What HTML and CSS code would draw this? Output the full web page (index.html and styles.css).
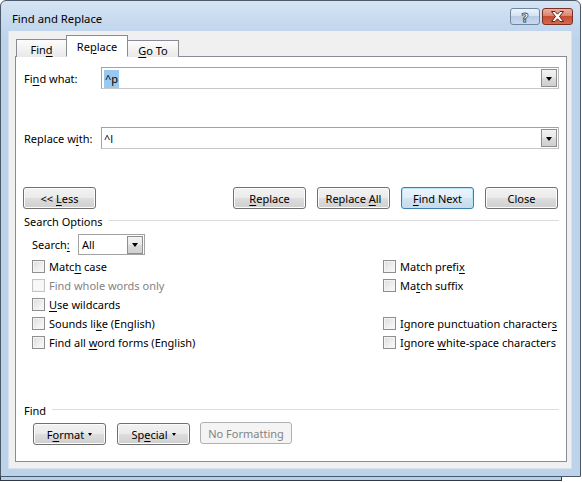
FILE: index.html
```html
<!DOCTYPE html>
<html>
<head>
<meta charset="utf-8">
<link rel="stylesheet" href="styles.css">
</head>
<body>
<div class="desktop">
  <div class="window-behind"></div>
  <div class="window">
    <div class="titlebar">
      <span class="title">Find and Replace</span>
      <div class="caption">
        <div class="cap-btn help"><span class="qmark">?</span></div>
        <div class="cap-btn close">
          <svg width="15" height="11" viewBox="0 0 15 11"><path d="M1.5 0.5 L5 0.5 L7.5 3.2 L10 0.5 L13.5 0.5 L9.5 5.5 L13.5 10.5 L10 10.5 L7.5 7.8 L5 10.5 L1.5 10.5 L5.5 5.5 Z" fill="#fff" stroke="#5a2418" stroke-width="1" stroke-linejoin="round"/></svg>
        </div>
      </div>
    </div>
    <div class="frame">
      <div class="client">
        <div class="tabs">
          <div class="tab first"><span>Fin<u>d</u></span></div>
          <div class="tab active"><span>Re<u>p</u>lace</span></div>
          <div class="tab last"><span><u>G</u>o To</span></div>
        </div>
        <div class="panel">
          <div class="field-row">
            <span class="field-label">Fi<u>n</u>d what:</span>
            <div class="combo"><span class="combo-text"><span class="sel">^p</span></span><span class="combo-btn"><i class="tri"></i></span></div>
          </div>
          <div class="field-row second">
            <span class="field-label">Replace w<u>i</u>th:</span>
            <div class="combo"><span class="combo-text">^l</span><span class="combo-btn"><i class="tri"></i></span></div>
          </div>
          <div class="button-row">
            <div class="btn"><span>&lt;&lt; <u>L</u>ess</span></div>
            <div class="btn-group">
              <div class="btn"><span><u>R</u>eplace</span></div>
              <div class="btn"><span>Replace <u>A</u>ll</span></div>
              <div class="btn default"><span><u>F</u>ind Next</span></div>
              <div class="btn"><span>Close</span></div>
            </div>
          </div>
          <div class="group-head"><span>Search Options</span><i class="rule"></i></div>
          <div class="search-row">
            <span class="search-label">Search<u>:</u></span>
            <div class="select"><span class="select-text">All</span><span class="select-btn"><i class="tri"></i></span></div>
          </div>
          <div class="options">
            <div class="col">
              <div class="check"><i class="box"></i><span>Matc<u>h</u> case</span></div>
              <div class="check disabled"><i class="box"></i><span>Find whole words only</span></div>
              <div class="check"><i class="box"></i><span><u>U</u>se wildcards</span></div>
              <div class="check"><i class="box"></i><span>Sounds li<u>k</u>e (English)</span></div>
              <div class="check"><i class="box"></i><span>Find all <u>w</u>ord forms (English)</span></div>
            </div>
            <div class="col right">
              <div class="check"><i class="box"></i><span>Match prefi<u>x</u></span></div>
              <div class="check"><i class="box"></i><span>Ma<u>t</u>ch suffix</span></div>
              <div class="check empty"></div>
              <div class="check"><i class="box"></i><span>Ignore punctuation character<u>s</u></span></div>
              <div class="check"><i class="box"></i><span>Ignore <u>w</u>hite-space characters</span></div>
            </div>
          </div>
          <div class="group-head find-head"><span>Find</span><i class="rule"></i></div>
          <div class="format-row">
            <div class="btn menu"><span>F<u>o</u>rmat</span><i class="mini-tri"></i></div>
            <div class="btn menu"><span>Sp<u>e</u>cial</span><i class="mini-tri"></i></div>
            <div class="btn disabled wide"><span>No Formatting</span></div>
          </div>
        </div>
      </div>
    </div>
  </div>
</div>
</body>
</html>
```

FILE: styles.css
```css
html, body {
  margin: 0;
  padding: 0;
}
body {
  font-family: "Noto Sans", "Open Sans", sans-serif;
  font-size: 11px;
  color: #000;
  background: #fff;
}
u {
  text-decoration: underline;
  text-underline-offset: 2px;
  text-decoration-thickness: 1px;
}
.desktop {
  position: relative;
  width: 582px;
  height: 482px;
  overflow: hidden;
  background: #ffffff;
}
.window-behind {
  position: absolute;
  left: 0;
  top: 20px;
  width: 562px;
  height: 461px;
  box-sizing: border-box;
  border: 1px solid #2f3b48;
  background: #b6d0ea;
}
.window {
  position: absolute;
  left: 0;
  top: 0;
  width: 581px;
  height: 477px;
  box-sizing: border-box;
  border: 1px solid #4a5a6b;
  border-radius: 6px 6px 0 0;
  background: linear-gradient(#d6e4f3 0px, #c4d8ee 24px, #bcd3ea 40px, #bcd3ea 100%);
  display: flex;
  flex-direction: column;
}
.titlebar {
  height: 30px;
  flex: none;
  display: flex;
  align-items: center;
  padding-left: 11px;
  padding-right: 7px;
  box-sizing: border-box;
}
.title {
  flex: 1;
  font-size: 11.3px;
  margin-top: 5px;
}
.caption {
  display: flex;
  gap: 2px;
  margin-top: 1px;
}
.cap-btn {
  height: 17px;
  box-sizing: border-box;
  border-radius: 3px;
  display: flex;
  align-items: center;
  justify-content: center;
}
.help {
  width: 30px;
  border: 1px solid #6f84a0;
  background: linear-gradient(#eef4fb 0%, #d4e1f1 45%, #b8cce4 50%, #c9daee 100%);
}
.qmark {
  font-family: "DejaVu Sans", sans-serif;
  font-weight: bold;
  font-size: 13px;
  color: #fff;
  -webkit-text-stroke: 0.8px #3e4e64;
  line-height: 1;
  margin-top: 1px;
}
.close {
  width: 31px;
  border: 1px solid #7a3022;
  background: linear-gradient(#eab0a2 0%, #dd8670 45%, #c74d33 50%, #d56a4c 100%);
}
.frame {
  flex: 1;
  display: flex;
  padding: 0 8px 7px 7px;
}
.client {
  flex: 1;
  background: #f0f0f0;
  border: 1px solid #d6e2ef;
  border-top: none;
  display: flex;
  flex-direction: column;
  padding: 5px 4px 6px 6px;
}
.tabs {
  display: flex;
  align-items: flex-end;
  height: 21px;
  padding-left: 1px;
  position: relative;
  z-index: 1;
  margin-bottom: -1px;
}
.tab {
  height: 18px;
  box-sizing: border-box;
  border: 1px solid #898c95;
  border-bottom: none;
  background: linear-gradient(#fcfcfc, #e9e9e9);
  display: flex;
  align-items: center;
  justify-content: center;
  padding-top: 2px;
}
.tab.first {
  width: 51px;
}
.tab.last {
  width: 52px;
  margin-left: -1px;
  height: 17px;
}
.tab.active {
  width: 62px;
  height: 22px;
  margin-left: -1px;
  background: #fff;
  padding-top: 1px;
  padding-bottom: 1px;
  border-bottom: 1px solid #fff;
  position: relative;
  z-index: 2;
}
.panel {
  flex: 1;
  background: #fff;
  border: 1px solid #898c95;
  display: flex;
  flex-direction: column;
  padding: 1px 7px 0 8px;
}
.field-row {
  display: flex;
  align-items: center;
  margin-top: 9px;
}
.field-row.second {
  margin-top: 38px;
}
.field-label {
  width: 77px;
  flex: none;
}
.combo {
  flex: 1;
  height: 22px;
  box-sizing: border-box;
  border: 1px solid #a3a3a3;
  border-right-color: #b9b9b9;
  border-bottom-color: #c7c7c7;
  display: flex;
  align-items: center;
  padding: 0 0 0 1px;
}
.combo-text {
  flex: 1;
  padding-left: 1px;
}
.sel {
  background: #99c9ef;
  padding: 1px 1px 2px 1px;
}
.combo-btn, .select-btn {
  width: 16px;
  height: 18px;
  box-sizing: border-box;
  border: 1px solid #8f8f8f;
  background: linear-gradient(#f3f3f3 0%, #e8e8e8 49%, #dcdcdc 51%, #cfcfcf 100%);
  display: flex;
  align-items: center;
  justify-content: center;
  margin-right: 1px;
}
.tri {
  width: 0;
  height: 0;
  border-left: 3.5px solid transparent;
  border-right: 3.5px solid transparent;
  border-top: 4px solid #000;
  margin-top: 1px;
}
.button-row {
  display: flex;
  justify-content: space-between;
  margin-top: 38px;
  margin-left: -1px;
  margin-right: 1px;
}
.btn-group {
  display: flex;
  gap: 11px;
}
.btn {
  width: 73px;
  height: 22px;
  box-sizing: border-box;
  border: 1px solid #707070;
  border-radius: 3px;
  background: linear-gradient(#f2f2f2 0%, #ebebeb 48%, #dddddd 52%, #cfcfcf 100%);
  display: flex;
  align-items: center;
  justify-content: center;
  box-shadow: inset 0 0 0 1px #fcfcfc;
}
.btn.default {
  border-color: #3c7fb1;
  box-shadow: inset 0 0 0 1px #b8e3f8;
  background: linear-gradient(#eaf4fb 0%, #e1eef8 48%, #d3e4f1 52%, #c6daea 100%);
}
.btn.disabled {
  color: #838383;
  border-color: #adb2b5;
  background: #f4f4f4;
  box-shadow: none;
}
.btn.wide {
  width: 92px;
  margin-top: -1px;
  margin-left: -1px;
}
.group-head {
  display: flex;
  align-items: center;
  height: 14px;
  margin-top: 5px;
}
.group-head .rule {
  flex: 1;
  height: 1px;
  background: #dcdcdc;
  margin-left: 6px;
  margin-top: -1px;
}
.search-row {
  display: flex;
  align-items: center;
  margin-top: 6px;
  padding-left: 8px;
}
.search-label {
  width: 46px;
}
.select {
  width: 67px;
  height: 21px;
  box-sizing: border-box;
  border: 1px solid #a3a3a3;
  display: flex;
  align-items: center;
  padding-left: 3px;
}
.select-text {
  flex: 1;
}
.options {
  display: flex;
  padding-left: 8px;
  margin-top: 2px;
}
.col {
  width: 351px;
}
.col.right {
  width: auto;
}
.check {
  height: 19px;
  display: flex;
  align-items: center;
  gap: 4px;
}
.box {
  width: 13px;
  height: 13px;
  box-sizing: border-box;
  border: 1px solid #8e8f8f;
  background: linear-gradient(135deg, #dcdcdc 0%, #f0f0f0 60%, #fbfbfb 100%);
  box-shadow: inset 0 0 0 1px #f4f4f4;
}
.check.disabled {
  color: #838383;
}
.check.disabled .box {
  border-color: #c4c4c4;
  background: #f8f8f8;
}
.find-head {
  margin-top: 51px;
}
.format-row {
  display: flex;
  gap: 11px;
  margin-top: 6px;
  padding-left: 9px;
  align-items: flex-start;
}
.mini-tri {
  width: 0;
  height: 0;
  border-left: 2.5px solid transparent;
  border-right: 2.5px solid transparent;
  border-top: 3px solid #000;
  margin-left: 4px;
  margin-top: 1px;
}
```
